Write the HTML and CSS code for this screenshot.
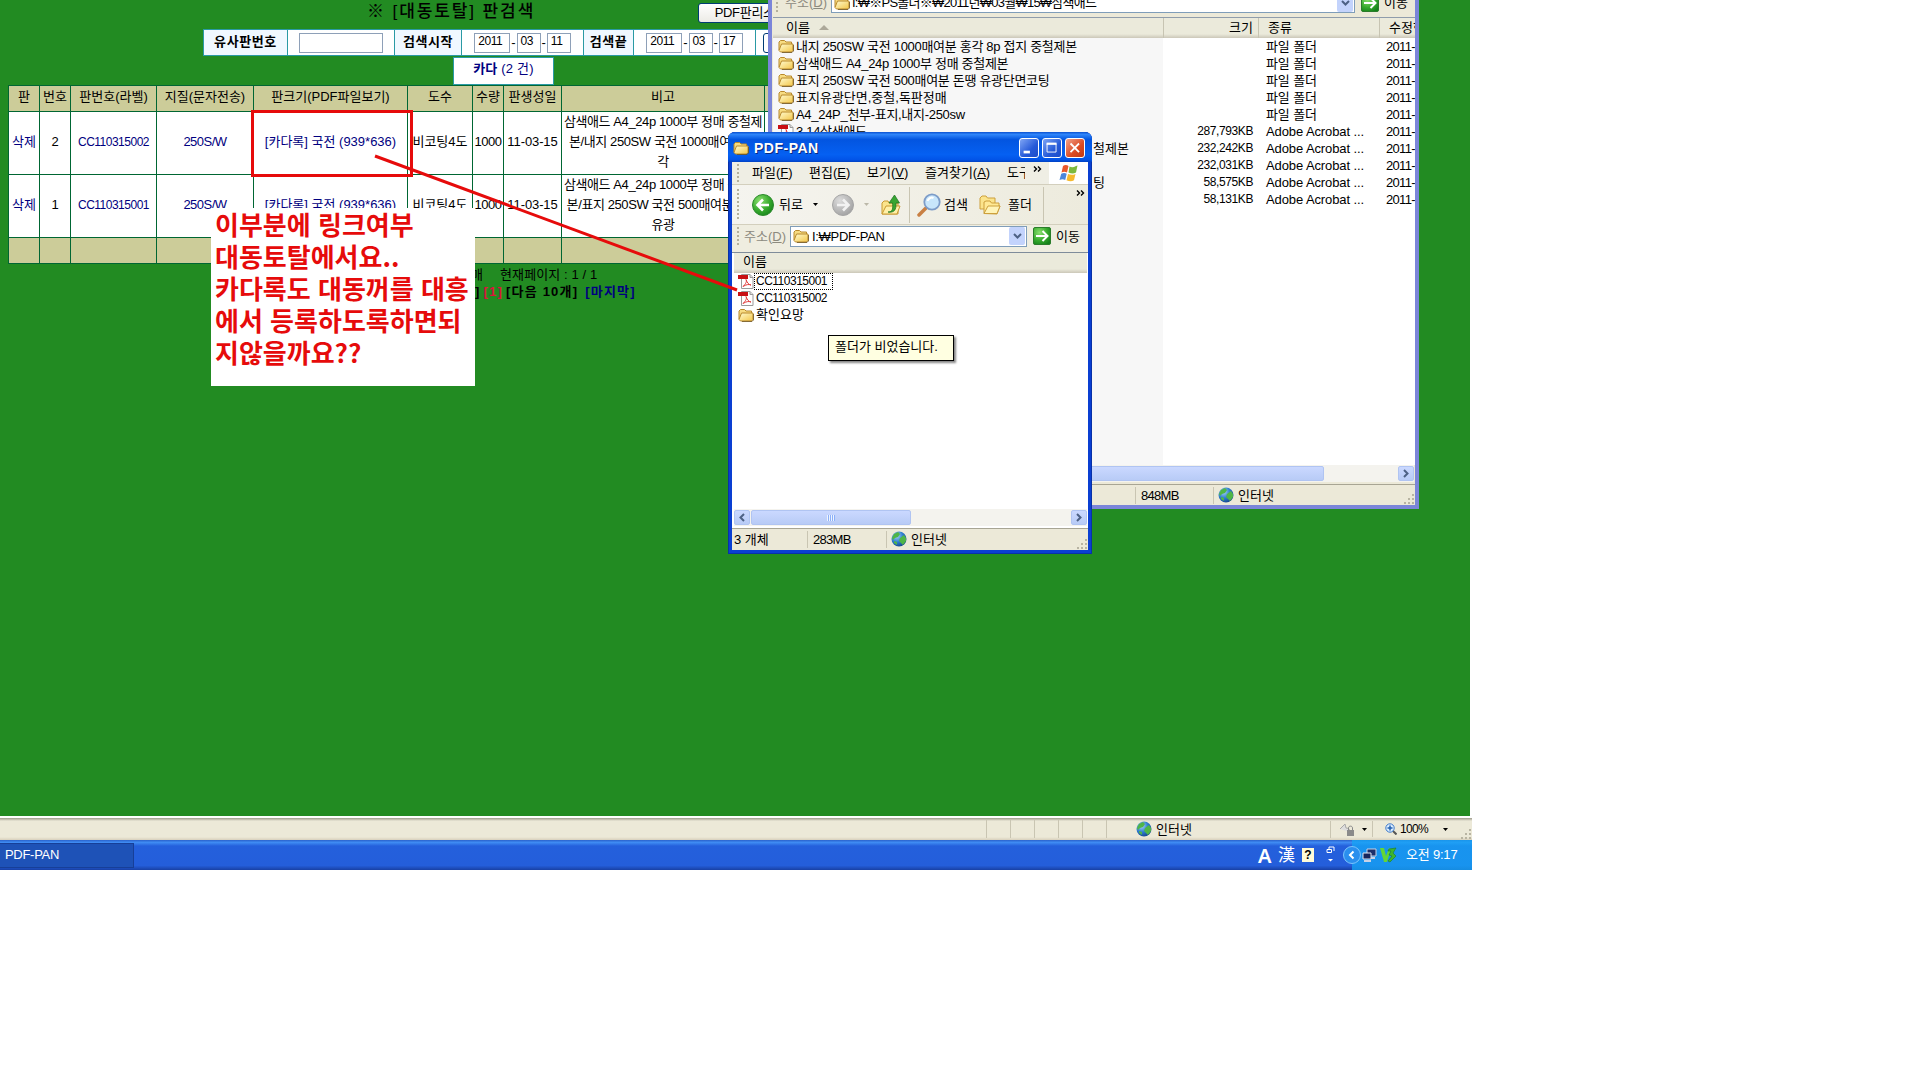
FILE: index.html
```html
<!DOCTYPE html>
<html lang="ko">

<head>
    <meta charset="UTF-8">
    <meta name="viewport" content="width=device-width, initial-scale=1.0">
    <title>PDF-PAN</title>

    <link rel="stylesheet" href="styles.css">
</head>

<body>

    <!-- shared icons -->
    <svg class="defs">
        <defs>
            <linearGradient id="gFolder" x1="0" y1="0" x2="1" y2="1">
                <stop offset="0" stop-color="#fffbd0"/>
                <stop offset="1" stop-color="#f3c648"/>
            </linearGradient>
            <radialGradient id="gGreen" cx="0.35" cy="0.3" r="0.8">
                <stop offset="0" stop-color="#8be06f"/>
                <stop offset="0.6" stop-color="#35a82c"/>
                <stop offset="1" stop-color="#14801a"/>
            </radialGradient>
            <radialGradient id="gGray" cx="0.35" cy="0.3" r="0.8">
                <stop offset="0" stop-color="#dcdcdc"/>
                <stop offset="1" stop-color="#9e9e9e"/>
            </radialGradient>
            <radialGradient id="gGlobe" cx="0.35" cy="0.3" r="0.8">
                <stop offset="0" stop-color="#a9d4f6"/>
                <stop offset="0.5" stop-color="#2f7fd0"/>
                <stop offset="1" stop-color="#123c84"/>
            </radialGradient>
        </defs>
        <symbol id="folder" viewBox="0 0 16 14">
            <path d="M1 11V3l1.500-1.500h4L8 3h5.500v2" fill="#f7dc82" stroke="#b8892c"/>
            <path d="M3.500 5h11.500v6.500l-1.500 1.500H2.500L1 11.500z" fill="url(#gFolder)" stroke="#b8892c"/>
            <path d="M4 13.500h10l1.500-1.500V6" fill="none" stroke="#6e5420" stroke-width="0.8"/>
        </symbol>
        <symbol id="pdf" viewBox="0 0 16 16">
            <path d="M3.500 1.500h8.500l3 3v11H3.500z" fill="#fff" stroke="#9a9a9a"/>
            <path d="M12 1.500v3h3" fill="#ddd" stroke="#9a9a9a"/>
            <path d="M0 2h10v4H0z" fill="#c80f14"/>
            <path d="M8 6.500c1 2 0 4-3 7 3-2 6-2.500 8-1.500-2 0-4-2.500-5-5.500z" fill="none" stroke="#e23c3c"/>
        </symbol>
        <symbol id="globe" viewBox="0 0 16 16">
            <circle cx="8" cy="8" r="7.500" fill="url(#gGlobe)"/>
            <path d="M3 3l4-2 2 2-2 3-3 1-2 2-1-2zM9 7l4-3 2 3v3l-3 4-2-2-2-2zM3 10l3 1v3l-3-2z" fill="#4fb548"/>
        </symbol>
        <symbol id="back" viewBox="0 0 22 22">
            <circle cx="11" cy="11" r="10.500" fill="url(#gGreen)" stroke="#2c8a2c"/>
            <path d="M17 11H6M11 5.500L5.500 11l5.500 5.500" fill="none" stroke="#fff" stroke-width="2.600"/>
        </symbol>
        <symbol id="forward" viewBox="0 0 22 22">
            <circle cx="11" cy="11" r="10.500" fill="url(#gGray)" stroke="#a5a5a5"/>
            <path d="M5 11h11M11 5.500l5.500 5.500-5.500 5.500" fill="none" stroke="#f2f2f2" stroke-width="2.600"/>
        </symbol>
        <symbol id="go" viewBox="0 0 18 18">
            <rect x="0.500" y="0.500" width="17" height="17" rx="1.500" fill="url(#gGreen)" stroke="#2b7d2b"/>
            <path d="M3 9h11M9.500 4l5 5-5 5" fill="none" stroke="#fff" stroke-width="2"/>
        </symbol>
        <symbol id="more" viewBox="0 0 9 6">
            <path d="M1 0.500L3.500 3 1 5.500M5 0.500L7.500 3 5 5.500" fill="none" stroke="#000" stroke-width="1.400"/>
        </symbol>
        <symbol id="caret" viewBox="0 0 5 3">
            <path d="M0 0h5L2.500 3z" fill="currentColor"/>
        </symbol>
        <symbol id="grip" viewBox="0 0 12 12">
            <path d="M9 1h2v2H9zM5 5h2v2H5zM9 5h2v2H9zM1 9h2v2H1zM5 9h2v2H5zM9 9h2v2H9z" fill="#b8b4a2"/>
        </symbol>
        <symbol id="chevDown" viewBox="0 0 9 6">
            <path d="M1 1l3.500 3.500L8 1" fill="none" stroke="#4d6185" stroke-width="2"/>
        </symbol>
        <symbol id="chevLeft" viewBox="0 0 6 9">
            <path d="M5 1L1.500 4.500 5 8" fill="none" stroke="#4d6185" stroke-width="2"/>
        </symbol>
        <symbol id="chevRight" viewBox="0 0 6 9">
            <path d="M1 1l3.500 3.500L1 8" fill="none" stroke="#4d6185" stroke-width="2"/>
        </symbol>
    </svg>

    <div class="screen">

        <!-- Plate search page -->
        <div class="page">
            <div class="titleRow">
                <h1>※ [대동토탈] 판검색</h1>
                <button class="pdfList">PDF판리스트</button>
            </div>

            <div class="searchBar">
                <div class="label w84">유사판번호</div>
                <div class="field w107"><span class="box long"></span></div>
                <div class="label w67">검색시작</div>
                <div class="field w122"><span class="box year">2011</span>-<span class="box">03</span>-<span class="box">11</span></div>
                <div class="label w50">검색끝</div>
                <div class="field w122"><span class="box year">2011</span>-<span class="box">03</span>-<span class="box">17</span></div>
                <div class="field w107"><button class="find"></button></div>
            </div>

            <div class="kind"><b>카다</b> (2 건)</div>

            <table class="plates">
                <colgroup>
                    <col class="c31"><col class="c31"><col class="c86"><col class="c97"><col class="c154">
                    <col class="c65"><col class="c31"><col class="c58"><col class="c203"><col class="c97">
                </colgroup>
                <tr class="head">
                    <th>판</th><th>번호</th><th>판번호(라벨)</th><th>지질(문자전송)</th><th>판크기(PDF파일보기)</th>
                    <th>도수</th><th>수량</th><th>판생성일</th><th>비고</th><th></th>
                </tr>
                <tr class="item">
                    <td class="link">삭제</td><td>2</td><td class="link code">CC110315002</td><td class="link tight">250S/W</td>
                    <td class="link">[카다록] 국전 (939*636)</td><td>비코팅4도</td><td class="tight">1000</td><td class="day">11-03-15</td>
                    <td class="memo">삼색애드 A4_24p 1000부 정매 중철제<br>본/내지 250SW 국전 1000매여분 홍<br>각</td><td></td>
                </tr>
                <tr class="item">
                    <td class="link">삭제</td><td>1</td><td class="link code">CC110315001</td><td class="link tight">250S/W</td>
                    <td class="link">[카다록] 국전 (939*636)</td><td>비코팅4도</td><td class="tight">1000</td><td class="day">11-03-15</td>
                    <td class="memo">삼색애드 A4_24p 1000부 정매 중철제<br>본/표지 250SW 국전 500매여분 돈땡<br>유광</td><td></td>
                </tr>
                <tr class="foot">
                    <td></td><td></td><td></td><td></td><td></td><td></td><td></td><td></td><td></td><td></td>
                </tr>
            </table>

            <div class="count"><span>매</span><span>현재페이지 : 1 / 1</span></div>
            <div class="pager"><span>]</span><span class="now">[1]</span><span>[다음 10개]</span><span class="last">[마지막]</span></div>
        </div>

        <div class="note">이부분에 링크여부<br>대동토탈에서요..<br>카다록도 대동꺼를 대흥<br>에서 등록하도록하면되<br>지않을까요??</div>

        <!-- Explorer window behind -->
        <div class="window rear">
            <div class="rearAddress">
                <i class="dots"></i>
                <span class="addrLabel">주소(<u>D</u>)</span>
                <div class="addrBox"><svg class="i16"><use href="#folder"/></svg><span>I:₩※PS폴더※₩2011년₩03월₩15₩삼색애드</span><i class="drop"><svg><use href="#chevDown"/></svg></i></div>
                <svg class="goIcon"><use href="#go"/></svg><span>이동</span>
            </div>
            <div class="cols header">
                <span class="name">이름 <i class="sort"></i></span><span class="size">크기</span><span class="type">종류</span><span class="date">수정한</span>
            </div>
            <div class="files">
                <div class="cols"><span class="name"><svg class="i16"><use href="#folder"/></svg>내지 250SW 국전 1000매여분 홍각 8p 접지 중철제본</span><span class="size"></span><span class="type">파일 폴더</span><span class="date">2011-</span></div>
                <div class="cols"><span class="name"><svg class="i16"><use href="#folder"/></svg>삼색애드 A4_24p 1000부 정매 중철제본</span><span class="size"></span><span class="type">파일 폴더</span><span class="date">2011-</span></div>
                <div class="cols"><span class="name"><svg class="i16"><use href="#folder"/></svg>표지 250SW 국전 500매여분 돈땡 유광단면코팅</span><span class="size"></span><span class="type">파일 폴더</span><span class="date">2011-</span></div>
                <div class="cols"><span class="name wide"><svg class="i16"><use href="#folder"/></svg>표지유광단면,중철,독판정매</span><span class="size"></span><span class="type">파일 폴더</span><span class="date">2011-</span></div>
                <div class="cols"><span class="name"><svg class="i16"><use href="#folder"/></svg>A4_24P_천부-표지,내지-250sw</span><span class="size"></span><span class="type">파일 폴더</span><span class="date">2011-</span></div>
                <div class="cols"><span class="name"><svg class="i16"><use href="#pdf"/></svg>3.14삼색애드</span><span class="size">287,793KB</span><span class="type">Adobe Acrobat ...</span><span class="date">2011-</span></div>
                <div class="cols"><span class="name tail">철제본</span><span class="size">232,242KB</span><span class="type">Adobe Acrobat ...</span><span class="date">2011-</span></div>
                <div class="cols"><span class="name"></span><span class="size">232,031KB</span><span class="type">Adobe Acrobat ...</span><span class="date">2011-</span></div>
                <div class="cols"><span class="name tail">팅</span><span class="size">58,575KB</span><span class="type">Adobe Acrobat ...</span><span class="date">2011-</span></div>
                <div class="cols"><span class="name"></span><span class="size">58,131KB</span><span class="type">Adobe Acrobat ...</span><span class="date">2011-</span></div>
            </div>
            <div class="scroll"><i class="thumb"></i><i class="arrow"><svg><use href="#chevRight"/></svg></i></div>
            <div class="status">
                <span class="rearSize">848MB</span><span class="zone"><svg class="i16"><use href="#globe"/></svg>인터넷</span><svg class="grip"><use href="#grip"/></svg>
            </div>
        </div>

        <!-- PDF-PAN window -->
        <div class="window front">
            <div class="titleBar">
                <svg class="i16"><use href="#folder"/></svg>
                <span class="caption">PDF-PAN</span>
                <i class="winBtn"><svg viewBox="0 0 20 20"><path d="M4 13h7v3H4z" fill="#fff"/></svg></i>
                <i class="winBtn"><svg viewBox="0 0 20 20"><path d="M4.500 5h10v9.500h-10z" fill="none" stroke="#fff"/><path d="M4 4h11v2.500H4z" fill="#fff"/></svg></i>
                <i class="winBtn close"><svg viewBox="0 0 20 20"><path d="M5 5l9.500 9.500M14.500 5L5 14.500" stroke="#fff" stroke-width="2"/></svg></i>
            </div>
            <div class="menuBar">
                <i class="dots"></i>
                <span class="m57">파일(<u>F</u>)</span><span class="m58">편집(<u>E</u>)</span><span class="m58">보기(<u>V</u>)</span><span class="m82">즐겨찾기(<u>A</u>)</span><span class="cut">도구</span>
                <svg class="more"><use href="#more"/></svg>
                <div class="flag">
                    <svg viewBox="0 0 20 18">
                        <path d="M4 2c2-1.500 4-1 5.500 0L8 8.500C6 7.500 4.500 7.500 2.500 8.500z" fill="#e8582c"/>
                        <path d="M10.500 2.500c2 1 4 1 6.500-0.500L18.500 1.500 17 8.500c-2.500 1.500-5 1-7.500 0z" fill="#7cb93e"/>
                        <path d="M2.200 9.700c2-1 4-1 5.500 0L6.200 16c-2-1-3.500-1-5.700 0z" fill="#4a86dc"/>
                        <path d="M9 10c2 1 5 1.200 7.500 0L15 16.300c-2.500 1.500-5 1-7.500 0z" fill="#f5b92e"/>
                    </svg>
                </div>
            </div>
            <div class="toolBar">
                <i class="dots"></i>
                <svg class="i22"><use href="#back"/></svg><span class="backText">뒤로</span><svg class="caret"><use href="#caret"/></svg>
                <svg class="i22 fwd"><use href="#forward"/></svg><svg class="caret dim"><use href="#caret"/></svg>
                <svg class="up" viewBox="0 0 20 22"><path d="M1 20V9l2-2h4l1 2h9v11z" fill="#fbe48c" stroke="#c99a32"/><path d="M1 20l4-8h14l-3 8z" fill="#fff0a8" stroke="#c99a32"/><path d="M7 18c5 0 5-4 4.500-9H8l5.500-8 5 8H15c0.500 7-2 10-8 9z" fill="#38a532" stroke="#1c701c" stroke-width="0.700"/></svg>
                <i class="sep"></i>
                <svg class="lens" viewBox="0 0 24 24"><path d="M9.500 14.500L2 22" stroke="#c98044" stroke-width="3.500" stroke-linecap="round"/><circle cx="15" cy="9" r="7.700" fill="#c8e6fb" stroke="#7d9cc8" stroke-width="1.800"/><path d="M10.500 8c1-3 4-4 6-3" fill="none" stroke="#fff" stroke-width="2"/></svg>
                <span class="findText">검색</span>
                <svg class="tree" viewBox="0 0 22 20"><path d="M1 14V3l2-2h4l1.500 2H16v11z" fill="#fbe48c" stroke="#cda03c"/><path d="M5 18.500V7l2-1h4l1.500 2H20v3l1 0-3 8z" fill="#ffe995" stroke="#cda03c"/><path d="M5 18.500L9 11h12l-3 7.500z" fill="#fff4b8" stroke="#cda03c"/></svg>
                <span class="treeText">폴더</span>
                <i class="sep"></i>
                <svg class="more"><use href="#more"/></svg>
            </div>
            <div class="addressBar">
                <i class="dots"></i>
                <span class="addrLabel">주소(<u>D</u>)</span>
                <div class="addrBox"><svg class="i16"><use href="#folder"/></svg><span>I:₩PDF-PAN</span><i class="drop"><svg><use href="#chevDown"/></svg></i></div>
                <svg class="goIcon"><use href="#go"/></svg><span>이동</span>
            </div>
            <div class="client">
                <div class="header">이름</div>
                <div class="list">
                    <div class="row"><svg class="i16"><use href="#pdf"/></svg><span class="code focus">CC110315001</span></div>
                    <div class="row"><svg class="i16"><use href="#pdf"/></svg><span class="code">CC110315002</span></div>
                    <div class="row"><svg class="i16"><use href="#folder"/></svg><span>확인요망</span></div>
                </div>
                <div class="scroll"><i class="arrow"><svg><use href="#chevLeft"/></svg></i><i class="thumb ridged"><b></b></i><i class="arrow"><svg><use href="#chevRight"/></svg></i></div>
            </div>
            <div class="status">
                <span class="objects">3 개체</span><span class="total">283MB</span><span class="zone"><svg class="i16"><use href="#globe"/></svg>인터넷</span><svg class="grip"><use href="#grip"/></svg>
            </div>
            <div class="tip">폴더가 비었습니다.</div>
        </div>

        <!-- red marks over everything -->
        <svg class="marks" viewBox="0 0 1472 871">
            <rect x="252.500" y="111.500" width="159" height="64" fill="none" stroke="#e60b0b" stroke-width="3"/>
            <path d="M375 156L737 290" stroke="#e60b0b" stroke-width="3"/>
        </svg>

        <div class="ieStatus">
            <i class="cell first"></i><i class="cell"></i><i class="cell"></i><i class="cell"></i><i class="cell"></i><i class="cell"></i>
            <span class="ieZone"><svg class="i16"><use href="#globe"/></svg>인터넷</span>
            <span class="privacy">
                <svg class="i16" viewBox="0 0 16 16"><path d="M1 8l5-5 1 4c3 0 4 2 4 4" fill="#ddd" stroke="#a8a8a8"/><path d="M8 9h7v6H8z" fill="#8a8a8a"/><path d="M9.500 9V7c0-2.500 4-2.500 4 0v2" fill="none" stroke="#888"/></svg>
                <svg class="caret"><use href="#caret"/></svg>
            </span>
            <span class="zoom">
                <svg class="mag" viewBox="0 0 12 12"><path d="M8 8l3.500 3.500" stroke="#555" stroke-width="2"/><circle cx="5" cy="5" r="4.200" fill="#d9ecff" stroke="#3d78c8"/><path d="M5 2.500v5M2.500 5h5" stroke="#2360b0" stroke-width="1.500"/></svg>
                <span class="pct">100%</span>
                <svg class="caret"><use href="#caret"/></svg>
            </span>
            <svg class="grip"><use href="#grip"/></svg>
        </div>

        <div class="taskbar">
            <div class="task">PDF-PAN</div>
            <div class="lang">
                <span class="ime">A</span><span class="hanja">漢</span>
                <span class="help">?</span>
                <svg class="restore" viewBox="0 0 9 16"><path d="M3 1h5v4M3 1v2M1 3.500h4.500v3H1z" fill="none" stroke="#fff"/><path d="M2 13h5l-2.500 2.500z" fill="#fff"/></svg>
            </div>
            <div class="tray">
                <svg class="expand" viewBox="0 0 18 18"><circle cx="9" cy="9" r="8.500" fill="#2a8fee" stroke="#7cc4fb"/><path d="M10.500 5.500L7 9l3.500 3.500" fill="none" stroke="#fff" stroke-width="2"/></svg>
                <svg class="net" viewBox="0 0 15 15"><path d="M5 1h9v7H5z" fill="#1c2f6b" stroke="#c9d3e6"/><path d="M1 5h8v6H1z" fill="#16265c" stroke="#dfe5f0"/><path d="M2 13h7M9 10h4" stroke="#c9d3e6" stroke-width="2"/></svg>
                <svg class="v3" viewBox="0 0 17 16"><path d="M0 1h4l2 8L9 1l2 1-4 13H4z" fill="#63d636"/><path d="M9 2l7-1-3 5 3 3-6 6-2-1 4-5-3-1 2-4H8z" fill="#3db52e" stroke="#1d7d20" stroke-width="0.600"/></svg>
                <span class="clock">오전 9:17</span>
            </div>
        </div>
    </div>

</body>
</html>
```

FILE: styles.css
```css
* {
    box-sizing: border-box;
}

body {
    margin: 0;
    background-color: white;
    font-family: "Liberation Sans Narrow", "Liberation Sans", "Noto Sans CJK KR", sans-serif;
    font-size: 13px;
    line-height: 17px;
    color: black;
    white-space: nowrap;
}

i {
    font-style: normal;
}

svg {
    display: block;
    flex: none;
}

.defs {
    position: absolute;
    width: 0;
    height: 0;
}

.screen {
    position: relative;
    width: 1472px;
    height: 871px;
    overflow: hidden;
    display: flex;
    flex-direction: column;
}

/* letter widths */

.code {
    font-size: 12px;
    letter-spacing: -0.5px;
}

.tight {
    letter-spacing: -0.5px;
}

.day {
    letter-spacing: -0.1px;
}

/* ---------- web page ---------- */

.page {
    width: 1470px;
    height: 816px;
    background-color: #228b22;
}

.titleRow {
    display: flex;
    height: 29px;
    padding-left: 367px;
}

.titleRow h1 {
    width: 331px;
    margin: 1px 0 0;
    font-size: 17px;
    line-height: 22px;
    font-weight: 500;
    letter-spacing: 1.9px;
}

.pdfList {
    width: 101px;
    height: 20px;
    margin-top: 3px;
    padding: 0 0 0 4px;
    font: inherit;
    line-height: 14px;
    letter-spacing: -0.3px;
    border: 1px solid #003c74;
    border-radius: 3px;
    background: linear-gradient(white, #ecebe6);
}

.searchBar {
    display: flex;
    width: 661px;
    height: 27px;
    margin-left: 203px;
    border: 1px solid #2a9aa4;
    border-left: none;
}

.label,
.field {
    display: flex;
    justify-content: center;
    align-items: center;
    border-left: 1px solid #2a9aa4;
    background-color: white;
}

.label {
    padding-bottom: 3px;
    font-weight: bold;
    letter-spacing: 0.6px;
    background-color: #f0f8ff;
}

.w50 { width: 50px; }
.w67 { width: 67px; }
.w84 { width: 84px; }
.w107 { width: 107px; }
.w122 { width: 122px; }

.box {
    width: 24px;
    height: 20px;
    margin: 0 1px;
    padding-left: 3px;
    font-size: 12px;
    line-height: 15px;
    letter-spacing: -0.4px;
    border: 1px solid #8ea0b8;
}

.box.year {
    width: 36px;
}

.box.long {
    width: 84px;
}

.find {
    width: 92px;
    height: 20px;
    border: 1px solid #003c74;
    border-radius: 3px;
    background-color: white;
}

.kind {
    width: 101px;
    height: 28px;
    margin: 1px 0 0 453px;
    line-height: 21px;
    letter-spacing: 0.2px;
    text-align: center;
    color: navy;
    border: 1px solid #2a9aa4;
    background-color: white;
}

.plates {
    width: 854px;
    margin-left: 8px;
    table-layout: fixed;
    border-collapse: collapse;
}

.c31 { width: 31px; }
.c58 { width: 58px; }
.c65 { width: 65px; }
.c86 { width: 86px; }
.c97 { width: 97px; }
.c154 { width: 154px; }
.c203 { width: 203px; }

.plates th,
.plates td {
    padding: 0 0 2px;
    font-weight: normal;
    text-align: center;
    line-height: 20px;
    border: 1px solid #006633;
}

.head,
.foot {
    height: 26px;
    background-color: #cccc99;
}

.plates th {
    padding-bottom: 4px;
}

.item {
    height: 63px;
    background-color: white;
}

.plates .link {
    color: navy;
}

.plates .memo {
    letter-spacing: -0.4px;
}

.count {
    display: flex;
    gap: 17px;
    margin: 2px 0 0 471px;
    letter-spacing: 0.1px;
}

.pager {
    display: flex;
    gap: 3px;
    margin-left: 475px;
    font-weight: bold;
    letter-spacing: 1.2px;
}

.now {
    color: crimson;
}

.last {
    margin-left: 4px;
    color: navy;
}

.note {
    position: absolute;
    left: 211px;
    top: 208px;
    width: 264px;
    height: 178px;
    padding-left: 4px;
    font-family: "Noto Sans CJK KR", sans-serif;
    font-size: 26px;
    font-weight: bold;
    line-height: 32px;
    color: #e60b0b;
    background-color: white;
}

.marks {
    position: absolute;
    left: 0;
    top: 0;
    width: 1472px;
    height: 871px;
}

/* ---------- explorer windows ---------- */

.window {
    position: absolute;
    display: flex;
    flex-direction: column;
    background-color: #ece9d8;
}

.i16 {
    width: 16px;
    height: 16px;
}

.i22 {
    width: 22px;
    height: 22px;
}

.dots {
    width: 2px;
    height: 18px;
    background: repeating-linear-gradient(#b4b09c 0 2px, transparent 2px 4px);
}

.addrLabel {
    color: #8c8a7e;
}

.addrBox {
    display: flex;
    align-items: center;
    height: 21px;
    padding: 0 1px 0 2px;
    border: 1px solid #7f9db9;
    background-color: white;
}

.addrBox span {
    flex: 1;
    margin-left: 3px;
    letter-spacing: -0.3px;
}

.drop {
    display: flex;
    justify-content: center;
    align-items: center;
    width: 16px;
    height: 18px;
    border-radius: 2px;
    background-color: #c3d3fc;
}

.drop svg {
    width: 9px;
    height: 6px;
}

.goIcon {
    width: 18px;
    height: 18px;
    margin: 0 5px 0 6px;
}

.header {
    height: 20px;
    line-height: 18px;
    background: linear-gradient(#ebeadb 80%, #cbc7b8);
}

.scroll {
    display: flex;
    align-items: center;
    height: 17px;
    background-color: #f4f3ee;
}

.thumb,
.arrow {
    display: flex;
    justify-content: center;
    align-items: center;
    height: 15px;
    border: 1px solid #b0c4f2;
    border-radius: 2px;
    background: linear-gradient(#cad8ff, #b8cbf6);
}

.arrow {
    width: 16px;
}

.arrow svg {
    width: 6px;
    height: 9px;
}

.status {
    display: flex;
    align-items: center;
    height: 21px;
    border-top: 1px solid #a8a594;
    background-color: #ece9d8;
}

.status span {
    border-right: 1px solid #c9c5b2;
}

.status .zone {
    display: flex;
    flex: 1;
    gap: 4px;
    padding-left: 4px;
    border-right: none;
}

.grip {
    width: 12px;
    height: 12px;
    align-self: flex-end;
}

/* rear window */

.rear {
    left: 768px;
    top: -8px;
    width: 651px;
    height: 517px;
    border: 4px solid #7b85d9;
    border-top: none;
    overflow: hidden;
}

.rearAddress {
    display: flex;
    align-items: center;
    height: 25px;
    padding: 0 0 3px 4px;
}

.rearAddress .addrLabel {
    width: 46px;
    margin-left: 7px;
}

.rearAddress .addrBox {
    width: 524px;
}

.rearAddress .addrBox span {
    margin-left: 2px;
    letter-spacing: -0.75px;
}

.cols {
    display: flex;
    height: 17px;
}

.cols.header {
    height: 21px;
    margin-left: 1px;
    line-height: 20px;
    border-top: 1px solid #8f9cab;
}

.sort {
    display: inline-block;
    margin: 0 0 2px 5px;
    border: 5px solid transparent;
    border-top: none;
    border-bottom-color: #aca899;
}

.name {
    display: flex;
    gap: 2px;
    width: 390px;
    padding-left: 5px;
    letter-spacing: -0.3px;
    overflow: hidden;
}

.name.wide {
    letter-spacing: 0;
}

.header .name {
    display: block;
    padding-left: 13px;
    letter-spacing: 0;
}

.name.tail {
    padding-left: 320px;
    letter-spacing: 0;
}

.size {
    width: 95px;
    padding-right: 5px;
    font-size: 12px;
    text-align: right;
    letter-spacing: -0.4px;
}

.type {
    width: 121px;
    padding-left: 8px;
    letter-spacing: -0.1px;
}

.date {
    width: 36px;
    padding-left: 7px;
    letter-spacing: -0.7px;
    overflow: hidden;
}

.header .size,
.header .type,
.header .date {
    font-size: 13px;
    letter-spacing: 0;
    border-left: 1px solid #c7c4b2;
}

.header .type {
    padding-left: 9px;
}

.header .date {
    padding-left: 9px;
}

.files {
    height: 429px;
    margin-left: 1px;
    background: linear-gradient(90deg, #f7f7f7 390px, white 390px);
}

.rear .scroll {
    justify-content: space-between;
    margin-right: 1px;
}

.rear .thumb {
    width: 552px;
}

.rear .status {
    margin-top: 2px;
    padding-left: 363px;
}

.rearSize {
    width: 79px;
    padding-left: 5px;
    letter-spacing: -0.7px;
    border-left: 1px solid #c9c5b2;
}

/* front window */

.front {
    left: 728px;
    top: 132px;
    width: 364px;
    height: 422px;
    padding: 0 4px 4px;
    border-radius: 7px 7px 0 0;
    background-color: #0a3fd2;
    box-shadow: inset 0 0 0 1px #0831a8;
}

.titleBar {
    display: flex;
    align-items: center;
    gap: 3px;
    height: 30px;
    margin: 0 -4px;
    padding: 2px 7px 0 5px;
    border-radius: 7px 7px 0 0;
    background: linear-gradient(#0a50d0, #2e85fa 8%, #0355e0 25%, #0560f2 75%, #0254e8 92%, #0141c2);
}

.caption {
    flex: 1;
    margin-left: 2px;
    font-weight: bold;
    font-size: 14px;
    letter-spacing: 0.5px;
    color: white;
    text-shadow: 1px 1px #0a2a80;
}

.winBtn {
    width: 20px;
    height: 20px;
    border: 1px solid white;
    border-radius: 3px;
    background: linear-gradient(135deg, #7fa5f5, #2559d8 60%, #1c4cc8);
}

.winBtn.close {
    background: linear-gradient(135deg, #f0a18a, #dc4a22 60%, #c03a15);
}

.menuBar {
    display: flex;
    align-items: center;
    height: 23px;
    padding-left: 5px;
    border-bottom: 1px solid #d3cfbd;
    background-color: #efeee4;
}

.menuBar span {
    line-height: 15px;
    padding-bottom: 2px;
}

.menuBar .dots {
    margin-right: 13px;
}

.m57 { width: 57px; }
.m58 { width: 58px; }
.m82 { width: 82px; }

.cut {
    width: 18px;
    overflow: hidden;
}

.more {
    width: 9px;
    height: 6px;
    margin-bottom: 8px;
}

.menuBar .more {
    margin-left: 8px;
}

.flag {
    display: flex;
    justify-content: center;
    align-items: center;
    width: 39px;
    height: 22px;
    margin-left: auto;
    background-color: white;
}

.flag svg {
    width: 20px;
    height: 18px;
}

.toolBar {
    display: flex;
    align-items: center;
    height: 40px;
    padding-left: 5px;
    border-bottom: 1px solid #d3cfbd;
    background: linear-gradient(90deg, #f5f4ef, #edebdd);
}

.toolBar .dots {
    height: 32px;
    margin-right: 13px;
}

.caret {
    width: 5px;
    height: 3px;
}

.caret.dim {
    color: #bbb8a8;
    margin: 0 12px 0 10px;
}

.backText {
    width: 34px;
    margin-left: 5px;
}

.fwd {
    margin-left: 14px;
}

.up {
    width: 20px;
    height: 22px;
}

.sep {
    width: 1px;
    height: 36px;
    background-color: #c9c5b2;
}

.toolBar .up + .sep {
    margin: 0 7px 0 8px;
}

.lens {
    width: 24px;
    height: 24px;
}

.findText {
    width: 35px;
    margin-left: 3px;
}

.tree {
    width: 22px;
    height: 20px;
}

.treeText {
    width: 35px;
    margin-left: 7px;
}

.toolBar .more {
    margin: 0 0 24px 32px;
}

.addressBar {
    display: flex;
    align-items: center;
    height: 27px;
    padding: 0 0 5px 5px;
    background-color: #efede0;
}

.addressBar .addrLabel {
    width: 46px;
    margin-left: 5px;
}

.addressBar .addrBox {
    width: 237px;
}

.client {
    display: flex;
    flex-direction: column;
    height: 276px;
    padding: 0 1px 2px 2px;
    border-top: 1px solid #7f8c9a;
    background-color: white;
}

.client .header {
    padding-left: 9px;
}

.list {
    flex: 1;
    padding-left: 4px;
}

.row {
    display: flex;
    height: 17px;
}

.row span {
    padding: 0 1px;
    border: 1px solid transparent;
    line-height: 14px;
}

.row .focus {
    width: 79px;
    border: 1px dotted black;
}

.client .thumb {
    width: 160px;
    margin: 0 160px 0 1px;
}

.ridged b {
    width: 8px;
    height: 6px;
    background: repeating-linear-gradient(90deg, #eef4fe 0 1px, #8cb0f8 1px 2px);
}

.front .status {
    height: 22px;
    padding-left: 2px;
}

.objects {
    width: 74px;
}

.total {
    width: 79px;
    padding-left: 5px;
    letter-spacing: -0.7px;
}

.tip {
    position: absolute;
    left: 100px;
    top: 203px;
    width: 126px;
    height: 26px;
    padding-left: 6px;
    line-height: 22px;
    border: 1px solid black;
    background-color: #ffffe1;
    box-shadow: 2px 2px 2px #888;
}

/* ---------- bottom bars ---------- */

.ieStatus {
    display: flex;
    align-items: center;
    height: 24px;
    border-top: 2px solid white;
    background: linear-gradient(#9c9a8c, #ece9d8 3px, #ece9d8 19px, #d8d0bc);
}

.cell {
    width: 24px;
    height: 18px;
    border-right: 1px solid #c9c5b2;
}

.cell.first {
    width: 987px;
}

.ieZone {
    display: flex;
    gap: 4px;
    width: 223px;
    margin-left: 1px;
    padding-left: 28px;
    border-right: 1px solid #c9c5b2;
}

.privacy {
    display: flex;
    align-items: center;
    gap: 7px;
    width: 42px;
    padding-left: 8px;
    border-right: 1px solid #c9c5b2;
}

.zoom {
    display: flex;
    align-items: center;
    gap: 3px;
    padding-left: 12px;
}

.mag {
    width: 12px;
    height: 12px;
}

.pct {
    width: 40px;
    font-size: 12px;
    letter-spacing: -0.7px;
}

.ieStatus .grip {
    margin-left: auto;
}

.taskbar {
    display: flex;
    align-items: center;
    height: 30px;
    color: white;
    background: linear-gradient(#2a62cc, #3f8cf3 8%, #2460dc 20%, #245edb 85%, #1941a5);
}

.task {
    width: 134px;
    height: 25px;
    padding-left: 5px;
    line-height: 22px;
    letter-spacing: -0.3px;
    border: 1px solid #173f98;
    border-left: none;
    background-color: #1e52b7;
}

.lang {
    display: flex;
    align-items: center;
    width: 209px;
    margin-left: 1000px;
    padding-left: 124px;
}

.ime {
    width: 20px;
    font-family: "Noto Sans", sans-serif;
    font-size: 20px;
    font-weight: 600;
}

.hanja {
    width: 24px;
    font-size: 17px;
}

.help {
    width: 12px;
    height: 14px;
    font-size: 12px;
    font-weight: bold;
    line-height: 14px;
    text-align: center;
    color: black;
    background-color: #fffbd8;
}

.restore {
    width: 9px;
    height: 16px;
    margin: 0 0 3px 12px;
}

.tray {
    display: flex;
    align-items: center;
    width: 129px;
    height: 30px;
    background: linear-gradient(90deg, transparent 9px, rgba(20, 165, 245, 0.75) 9px);
}

.expand {
    width: 18px;
    height: 18px;
}

.net {
    width: 15px;
    height: 15px;
    margin: 0 3px 0 1px;
}

.v3 {
    width: 17px;
    height: 16px;
}

.clock {
    margin: 0 0 2px 9px;
    letter-spacing: -0.2px;
}
```
